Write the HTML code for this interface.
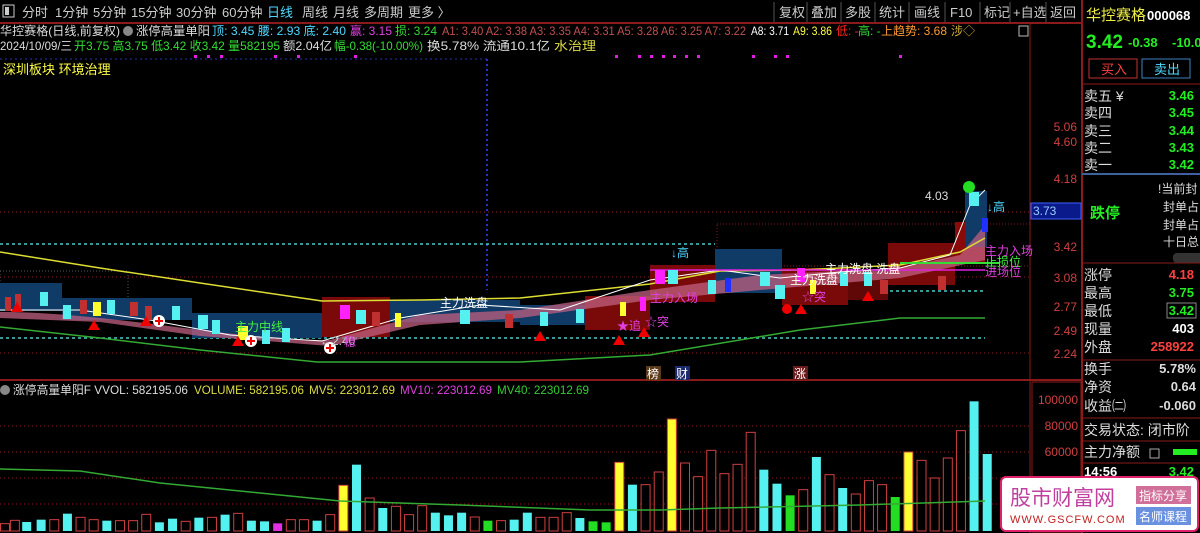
<!DOCTYPE html>
<html><head><meta charset="utf-8">
<style>
body{margin:0;background:#000;width:1200px;height:533px;overflow:hidden;font-family:"Liberation Sans","Noto Sans CJK SC",sans-serif;}
svg{position:absolute;left:0;top:0}
text{font-family:"Liberation Sans","Noto Sans CJK SC",sans-serif}
</style></head><body>
<svg id="s" width="1200" height="533" viewBox="0 0 1200 533" xmlns="http://www.w3.org/2000/svg">
<rect width="1200" height="533" fill="#000"/>
<g font-size="13" fill="#ccc">
<rect x="3" y="5" width="11" height="12" fill="none" stroke="#ccc"/><rect x="5" y="7" width="4" height="8" fill="#ccc"/>
<text x="22" y="17">分时</text><text x="55" y="17">1分钟</text><text x="93" y="17">5分钟</text><text x="131" y="17">15分钟</text><text x="176" y="17">30分钟</text><text x="222" y="17">60分钟</text><text x="267" y="17" fill="#4fd8ff">日线</text><text x="302" y="17">周线</text><text x="333" y="17">月线</text><text x="364" y="17">多周期</text><text x="408" y="17">更多 〉</text>
<text x="779" y="17">复权</text><text x="811" y="17">叠加</text><text x="845" y="17">多股</text><text x="879" y="17">统计</text><text x="914" y="17">画线</text><text x="950" y="17">F10</text><text x="984" y="17">标记</text><text x="1013" y="17">+自选</text><text x="1050" y="17">返回</text>
</g>
<g stroke="#555"><line x1="774" y1="2" x2="774" y2="22"/><line x1="807" y1="2" x2="807" y2="22"/><line x1="841" y1="2" x2="841" y2="22"/><line x1="875" y1="2" x2="875" y2="22"/><line x1="909" y1="2" x2="909" y2="22"/><line x1="945" y1="2" x2="945" y2="22"/><line x1="980" y1="2" x2="980" y2="22"/><line x1="1010" y1="2" x2="1010" y2="22"/><line x1="1046" y1="2" x2="1046" y2="22"/></g>
<line x1="0" y1="23" x2="1082" y2="23" stroke="#8b1a1a" stroke-width="2"/>
<g font-size="12">
<text x="0" y="35" fill="#ddd" textLength="120" lengthAdjust="spacingAndGlyphs">华控赛格(日线,前复权)</text><circle cx="128" cy="31" r="5" fill="#888"/>
<text x="136" y="35" fill="#ddd" textLength="74" lengthAdjust="spacingAndGlyphs">涨停高量单阳</text>
<text x="212" y="35" fill="#4fd8ff" textLength="134" lengthAdjust="spacingAndGlyphs">顶: 3.45 腰: 2.93 底: 2.40</text>
<text x="350" y="35" fill="#e040e0" textLength="42" lengthAdjust="spacingAndGlyphs">赢: 3.15</text><text x="395" y="35" fill="#33dd33" textLength="42" lengthAdjust="spacingAndGlyphs">损: 3.24</text>
<text x="442" y="35" fill="#c05050" textLength="304" lengthAdjust="spacingAndGlyphs">A1: 3.40  A2: 3.38  A3: 3.35  A4: 3.31  A5: 3.28  A6: 3.25  A7: 3.22</text>
<text x="751" y="35" fill="#fff" textLength="38" lengthAdjust="spacingAndGlyphs">A8: 3.71</text><text x="793" y="35" fill="#ffff44" textLength="39" lengthAdjust="spacingAndGlyphs">A9: 3.86</text>
<text x="836" y="35" fill="#ff2020">低: -</text><text x="858" y="35" fill="#33dd33">高: -</text><text x="881" y="35" fill="#ff9933" textLength="66" lengthAdjust="spacingAndGlyphs">上趋势: 3.68</text><text x="951" y="35" fill="#ccaa33">涉◇</text>
<rect x="1019" y="26" width="9" height="10" fill="none" stroke="#bbb"/>
<text x="0" y="50" fill="#ddd" textLength="72" lengthAdjust="spacingAndGlyphs">2024/10/09/三</text>
<text x="74" y="50" fill="#33dd33" textLength="206" lengthAdjust="spacingAndGlyphs">开3.75 高3.75 低3.42 收3.42 量582195</text>
<text x="283" y="50" fill="#ddd" textLength="49" lengthAdjust="spacingAndGlyphs">额2.04亿</text><text x="334" y="50" fill="#33dd33" textLength="89" lengthAdjust="spacingAndGlyphs">幅-0.38(-10.00%)</text>
<text x="427" y="50" fill="#ddd" textLength="123" lengthAdjust="spacingAndGlyphs">换5.78% 流通10.1亿</text><text x="554" y="50" fill="#dddd44" textLength="42" lengthAdjust="spacingAndGlyphs">水治理</text>
<text x="3" y="74" fill="#ffff44" font-size="13">深圳板块  环境治理</text>
</g>
<g fill="#e020e0" id="dots"></g>
<line x1="0" y1="59" x2="487" y2="59" stroke="#2233aa" stroke-dasharray="2,3"/>
<line x1="487" y1="59" x2="487" y2="290" stroke="#2233cc" stroke-dasharray="2,3" stroke-width="2"/>
<line x1="1082" y1="0" x2="1082" y2="533" stroke="#8b1a1a" stroke-width="2"/>
<line x1="1030" y1="23" x2="1030" y2="533" stroke="#8b1a1a"/>
<line x1="0" y1="380" x2="1082" y2="380" stroke="#8b1a1a" stroke-width="2"/>
<rect x="1032" y="382" width="49" height="150" fill="none" stroke="#8b1a1a"/>
<g font-size="12" fill="#d04040" text-anchor="end">
<text x="1077" y="131">5.06</text><text x="1077" y="146">4.60</text><text x="1077" y="183">4.18</text><text x="1077" y="251">3.42</text><text x="1077" y="282">3.08</text><text x="1077" y="311">2.77</text><text x="1077" y="335">2.49</text><text x="1077" y="358">2.24</text>
<text x="1078" y="404">100000</text><text x="1078" y="430">80000</text><text x="1078" y="456">60000</text>
</g>
<rect x="1031" y="203" width="50" height="16" fill="#0a1a8a" stroke="#4060ff"/><text x="1033" y="215" font-size="12" fill="#9cf">3.73</text>
<g stroke="#8b1a1a" stroke-dasharray="1,3">
<line x1="0" y1="212" x2="1030" y2="212"/><line x1="0" y1="277" x2="1030" y2="277"/><line x1="0" y1="353" x2="1030" y2="353"/>
<line x1="0" y1="426" x2="1030" y2="426"/><line x1="0" y1="452" x2="1030" y2="452"/><line x1="0" y1="478" x2="1030" y2="478"/><line x1="0" y1="504" x2="1030" y2="504"/>
</g>
<g stroke="#44cccc" stroke-dasharray="3,3" stroke-width="1.5">
<line x1="0" y1="244" x2="715" y2="244"/><line x1="0" y1="338" x2="985" y2="338"/><line x1="890" y1="291" x2="985" y2="291"/>
</g>
<rect x="717" y="224" width="313" height="42" fill="none" stroke="#8b1a1a" stroke-dasharray="1,2"/>
<rect x="0" y="271" width="128" height="30" fill="none" stroke="#555" stroke-dasharray="1,2"/>
<g>
<rect x="0" y="283" width="62" height="28" fill="#0f3b66"/><rect x="62" y="298" width="130" height="22" fill="#0f3b66"/><rect x="192" y="313" width="130" height="25" fill="#0f3b66"/>
<rect x="322" y="297" width="68" height="40" fill="#7a0a0a"/><rect x="390" y="300" width="130" height="22" fill="#0f3b66"/>
<rect x="520" y="305" width="65" height="20" fill="#0f3b66"/><rect x="585" y="296" width="65" height="34" fill="#7a0a0a"/>
<rect x="650" y="265" width="65" height="37" fill="#7a0a0a"/><rect x="715" y="249" width="67" height="44" fill="#0f3b66"/>
<rect x="782" y="268" width="66" height="37" fill="#7a0a0a"/><rect x="848" y="272" width="40" height="28" fill="#600808"/>
<rect x="888" y="243" width="67" height="42" fill="#7a0a0a"/><rect x="955" y="222" width="30" height="40" fill="#8a0a0a"/>
<rect x="965" y="191" width="22" height="56" fill="#0f3b66"/>
</g>
<path d="M0,312 C60,312 120,320 200,330 S300,340 330,340 L420,315 L520,310 L650,290 L760,275 L900,268 L960,255 L985,225 L985,260 L900,278 L760,290 L650,300 L520,318 L420,325 L330,346 L200,336 L100,322 L0,318Z" fill="#c06080" opacity="0.75"/>
<polyline points="0,252 100,268 200,283 322,301 420,300 520,298 650,284 720,271 800,270 900,265 960,252 985,238" fill="none" stroke="#dddd33" stroke-width="1.5"/>
<polyline points="0,310 80,310 150,320 230,335 322,341 400,318 480,305 560,310 650,280 720,270 780,278 840,272 900,268 950,255 970,205 985,190" fill="none" stroke="#fff" stroke-width="1"/>
<polyline points="0,327 100,338 200,350 317,362 520,362 650,355 800,330 900,318 985,318" fill="none" stroke="#33aa33" stroke-width="1.5"/>
<line x1="900" y1="263" x2="1000" y2="263" stroke="#33dd33" stroke-width="2"/>
<line x1="650" y1="270" x2="985" y2="270" stroke="#e020e0" stroke-width="1.5"/>
<g id="cand"></g>
<g fill="#ee0000" id="tri"></g>
<circle cx="969" cy="187" r="6" fill="#22dd22"/>
<circle cx="787" cy="309" r="5" fill="#ee0000"/>
<g id="plus"></g>
<g font-size="12">
<text x="925" y="200" fill="#ddd">4.03</text><text x="671" y="257" fill="#4fd8ff">↓高</text><text x="987" y="211" fill="#4fd8ff">↓高</text>
<text x="440" y="307" fill="#fff">主力洗盘</text><text x="825" y="273" fill="#fff">主力洗盘 洗盘</text><text x="790" y="284" fill="#fff">主力洗盘</text>
<text x="235" y="331" fill="#44ee44">主力中线</text><text x="650" y="302" fill="#e040e0">主力入场</text><text x="985" y="255" fill="#e040e0">主力入场</text>
<text x="985" y="266" fill="#44ee44">止损位</text><text x="985" y="276" fill="#e040e0">进场位</text>
<text x="617" y="330" fill="#e040e0">★追</text><text x="645" y="326" fill="#e040e0">☆突</text><text x="802" y="301" fill="#e040e0">☆突</text>
<text x="320" y="345" fill="#ccc">←2.40</text><text x="344" y="346" fill="#e040e0">稳</text>
<rect x="646" y="366" width="15" height="14" fill="#5a3a1a"/><text x="647" y="378" fill="#fff">榜</text>
<rect x="675" y="366" width="15" height="14" fill="#1a2a6a"/><text x="676" y="378" fill="#fff">财</text>
<rect x="793" y="366" width="15" height="14" fill="#6a1a1a"/><text x="794" y="378" fill="#fff">涨</text>
</g>
<g font-size="12">
<circle cx="5" cy="390" r="5" fill="#888"/>
<text x="13" y="394" fill="#ddd" textLength="175" lengthAdjust="spacingAndGlyphs">涨停高量单阳F  VVOL: 582195.06</text><text x="194" y="394" fill="#dddd44" textLength="110" lengthAdjust="spacingAndGlyphs">VOLUME: 582195.06</text><text x="309" y="394" fill="#dddd44" textLength="86" lengthAdjust="spacingAndGlyphs">MV5: 223012.69</text><text x="400" y="394" fill="#e040e0" textLength="92" lengthAdjust="spacingAndGlyphs">MV10: 223012.69</text><text x="497" y="394" fill="#33cc33" textLength="92" lengthAdjust="spacingAndGlyphs">MV40: 223012.69</text>
</g>
<g id="vol"></g>
<polyline points="0,469 80,471 160,483 260,493 340,501 460,505 590,510 660,510 720,508 860,505 985,501" fill="none" stroke="#33aa33" stroke-width="1.5"/>
<g font-size="13">
<text x="1086" y="20" fill="#eeee44" font-size="15">华控赛格</text><text x="1147" y="20" fill="#fff" font-weight="bold" font-size="13">000068</text>
<text x="1086" y="48" fill="#22ee22" font-size="19" font-weight="bold">3.42</text><text x="1128" y="47" fill="#22ee22" font-weight="bold">-0.38</text><text x="1172" y="47" fill="#22ee22" font-weight="bold">-10.00</text>
<rect x="1089" y="59" width="48" height="19" fill="none" stroke="#c03030"/><text x="1101" y="74" fill="#ff4040">买入</text>
<rect x="1142" y="59" width="48" height="19" fill="none" stroke="#4080c0"/><text x="1154" y="74" fill="#4fd8ff">卖出</text>
<line x1="1082" y1="84" x2="1200" y2="84" stroke="#8b1a1a"/>
<g fill="#ddd" font-size="14"><text x="1084" y="101">卖五 ¥</text><text x="1084" y="118">卖四</text><text x="1084" y="136">卖三</text><text x="1084" y="153">卖二</text><text x="1084" y="170">卖一</text></g>
<g fill="#22ee22" font-weight="bold" text-anchor="end"><text x="1194" y="100">3.46</text><text x="1194" y="117">3.45</text><text x="1194" y="135">3.44</text><text x="1194" y="152">3.43</text><text x="1194" y="169">3.42</text></g>
<line x1="1082" y1="174" x2="1200" y2="174" stroke="#4060a0" stroke-width="2"/>
<text x="1090" y="218" fill="#22ee22" font-size="15" font-weight="bold">跌停</text>
<g fill="#ddd" font-size="12"><text x="1158" y="193">!当前封</text><text x="1163" y="211">封单占</text><text x="1163" y="229">封单占</text><text x="1163" y="246">十日总</text></g>
<rect x="1173" y="253" width="30" height="10" rx="4" fill="#333"/>
<line x1="1082" y1="263" x2="1200" y2="263" stroke="#8b1a1a"/>
<g fill="#ddd" font-size="14"><text x="1084" y="280">涨停</text><text x="1084" y="298">最高</text><text x="1084" y="316">最低</text><text x="1084" y="334">现量</text><text x="1084" y="352">外盘</text>
<text x="1084" y="374">换手</text><text x="1084" y="392">净资</text><text x="1084" y="411">收益㈡</text><text x="1084" y="435">交易状态: 闭市阶</text><text x="1084" y="457">主力净额</text></g>
<g font-weight="bold" text-anchor="end"><text x="1194" y="279" fill="#ff4040">4.18</text><text x="1194" y="297" fill="#22ee22">3.75</text><text x="1194" y="315" fill="#22ee22">3.42</text><text x="1194" y="333" fill="#fff">403</text><text x="1194" y="351" fill="#ff4040">258922</text>
<text x="1196" y="373" fill="#ddd">5.78%</text><text x="1196" y="391" fill="#ddd">0.64</text><text x="1196" y="410" fill="#ddd">-0.060</text></g>
<rect x="1167" y="303" width="29" height="15" fill="none" stroke="#888"/>
<line x1="1082" y1="360" x2="1200" y2="360" stroke="#8b1a1a"/><line x1="1082" y1="418" x2="1200" y2="418" stroke="#8b1a1a"/><line x1="1082" y1="441" x2="1200" y2="441" stroke="#8b1a1a"/><line x1="1082" y1="463" x2="1200" y2="463" stroke="#8b1a1a"/>
<rect x="1150" y="449" width="9" height="9" fill="none" stroke="#aaa"/><rect x="1173" y="449" width="24" height="6" fill="#22ee22"/>
<text x="1084" y="476" fill="#fff" font-weight="bold">14:56</text><text x="1194" y="476" fill="#22ee22" font-weight="bold" text-anchor="end">3.42</text>
</g>
<rect x="1001" y="477" width="197" height="54" rx="5" fill="#fff" stroke="#e0206a" stroke-width="2"/>
<text x="1010" y="505" fill="#c040a0" font-size="21">股市财富网</text>
<text x="1010" y="523" fill="#c02020" font-size="11" font-family="Liberation Serif,serif" letter-spacing="1">WWW.GSCFW.COM</text>
<rect x="1136" y="486" width="55" height="18" fill="#d0709a"/><text x="1139" y="500" fill="#fff" font-size="12">指标分享</text>
<rect x="1136" y="507" width="55" height="18" fill="#6a90e0"/><text x="1139" y="521" fill="#fff" font-size="12">名师课程</text>
</svg>
<script>
var NS="http://www.w3.org/2000/svg";
function el(p,t,a){var e=document.createElementNS(NS,t);for(var k in a)e.setAttribute(k,a[k]);document.getElementById(p).appendChild(e);return e;}
var v=[[0,437,'r'],[15,427,'r'],[33,432,'c'],[55,425,'c'],[75,425,'r'],[95,407,'c'],[115,418,'r'],[135,425,'r'],[155,428,'c'],[175,428,'r'],[195,428,'r'],[215,409,'r'],[235,433,'c'],[255,422,'c'],[275,430,'r'],[295,419,'c'],[315,418,'r'],[335,410,'c'],[355,406,'r'],[375,428,'c'],[395,430,'c'],[415,436,'m'],[435,425,'r'],[455,425,'r'],[475,428,'c'],[495,410,'r'],[515,322,'y'],[535,260,'c'],[555,360,'r'],[575,390,'c'],[595,385,'r'],[615,410,'r'],[635,383,'r'],[655,404,'c'],[675,412,'c'],[695,404,'c'],[715,417,'r'],[735,428,'g'],[755,428,'r'],[775,425,'c'],[795,404,'c'],[815,418,'r'],[835,418,'r'],[855,404,'r'],[875,420,'c'],[895,430,'g'],[915,433,'g'],[935,253,'y'],[955,320,'c'],[975,320,'r'],[995,282,'r'],[1015,123,'y'],[1035,255,'r'],[1055,296,'r'],[1075,217,'r'],[1095,287,'r'],[1115,259,'r'],[1135,163,'r'],[1155,275,'c'],[1175,317,'c'],[1195,352,'g'],[1215,335,'r'],[1235,237,'c'],[1255,290,'r'],[1275,330,'c'],[1295,348,'r'],[1315,308,'r'],[1335,320,'r'],[1355,357,'g'],[1375,222,'y'],[1395,247,'r'],[1415,300,'r'],[1435,240,'r'],[1455,158,'r'],[1475,70,'c'],[1495,228,'c']];
v.forEach(function(b){var x=b[0]*0.657,y=378+b[1]/3,h=531-y;
var a={x:x+0.5,y:y,width:9,height:h};
if(b[2]=='r'){a.fill='#000';a.stroke='#d04040';}else if(b[2]=='c'){a.fill='#55f0f0';}else if(b[2]=='g'){a.fill='#22dd22';}else if(b[2]=='m'){a.fill='#e030e0';}else{a.fill='#ffff30';a.stroke='#d04040';}
el('vol','rect',a);});
[ [17,307],[94,325],[146,321],[238,341],[540,336],[619,340],[644,332],[801,309],[868,296] ].forEach(function(p){el('tri','polygon',{points:(p[0]-6)+','+(p[1]+5)+' '+p[0]+','+(p[1]-5)+' '+(p[0]+6)+','+(p[1]+5)});});
[[159,321],[251,341],[330,348]].forEach(function(p){el('plus','circle',{cx:p[0],cy:p[1],r:6,fill:'#fff'});el('plus','path',{d:'M'+(p[0]-4)+','+p[1]+'h8M'+p[0]+','+(p[1]-4)+'v8',stroke:'#e00','stroke-width':2});});
[[194,56],[207,56],[220,56],[274,56],[297,56],[354,56],[615,56],[638,56],[650,56],[662,56],[673,56],[685,56],[697,56],[752,56],[774,56],[786,56],[899,56]].forEach(function(p){el('dots','rect',{x:p[0],y:p[1]-1,width:3,height:3});});
var cs=[[5,297,6,'#c03030'],[15,294,6,'#c03030'],[40,292,8,'#55f0f0'],[63,305,8,'#55f0f0'],[80,300,7,'#c03030'],[93,302,8,'#ffff30'],[107,300,8,'#55f0f0'],[130,302,8,'#c03030'],[145,306,7,'#c03030'],[172,306,8,'#55f0f0'],[198,315,10,'#55f0f0'],[212,320,8,'#55f0f0'],[238,326,10,'#ffff30'],[262,330,8,'#55f0f0'],[282,328,8,'#55f0f0'],[340,305,10,'#ff20ff'],[356,310,10,'#55f0f0'],[372,312,8,'#c03030'],[395,313,6,'#ffff30'],[460,310,10,'#55f0f0'],[505,314,8,'#c03030'],[540,312,8,'#55f0f0'],[576,309,8,'#55f0f0'],[620,302,6,'#ffff30'],[640,297,6,'#ff20ff'],[655,270,10,'#ff20ff'],[668,270,10,'#55f0f0'],[708,280,8,'#55f0f0'],[725,278,6,'#2030ff'],[760,272,10,'#55f0f0'],[775,285,10,'#55f0f0'],[797,268,8,'#ff20ff'],[810,280,6,'#ffff30'],[840,272,8,'#55f0f0'],[864,272,8,'#55f0f0'],[880,280,8,'#c03030'],[938,276,8,'#c03030'],[969,192,10,'#55f0f0'],[982,218,6,'#2030ff']];
cs.forEach(function(c){el('cand','rect',{x:c[0],y:c[1],width:c[2],height:14,fill:c[3]});});
</script>
</body></html>
